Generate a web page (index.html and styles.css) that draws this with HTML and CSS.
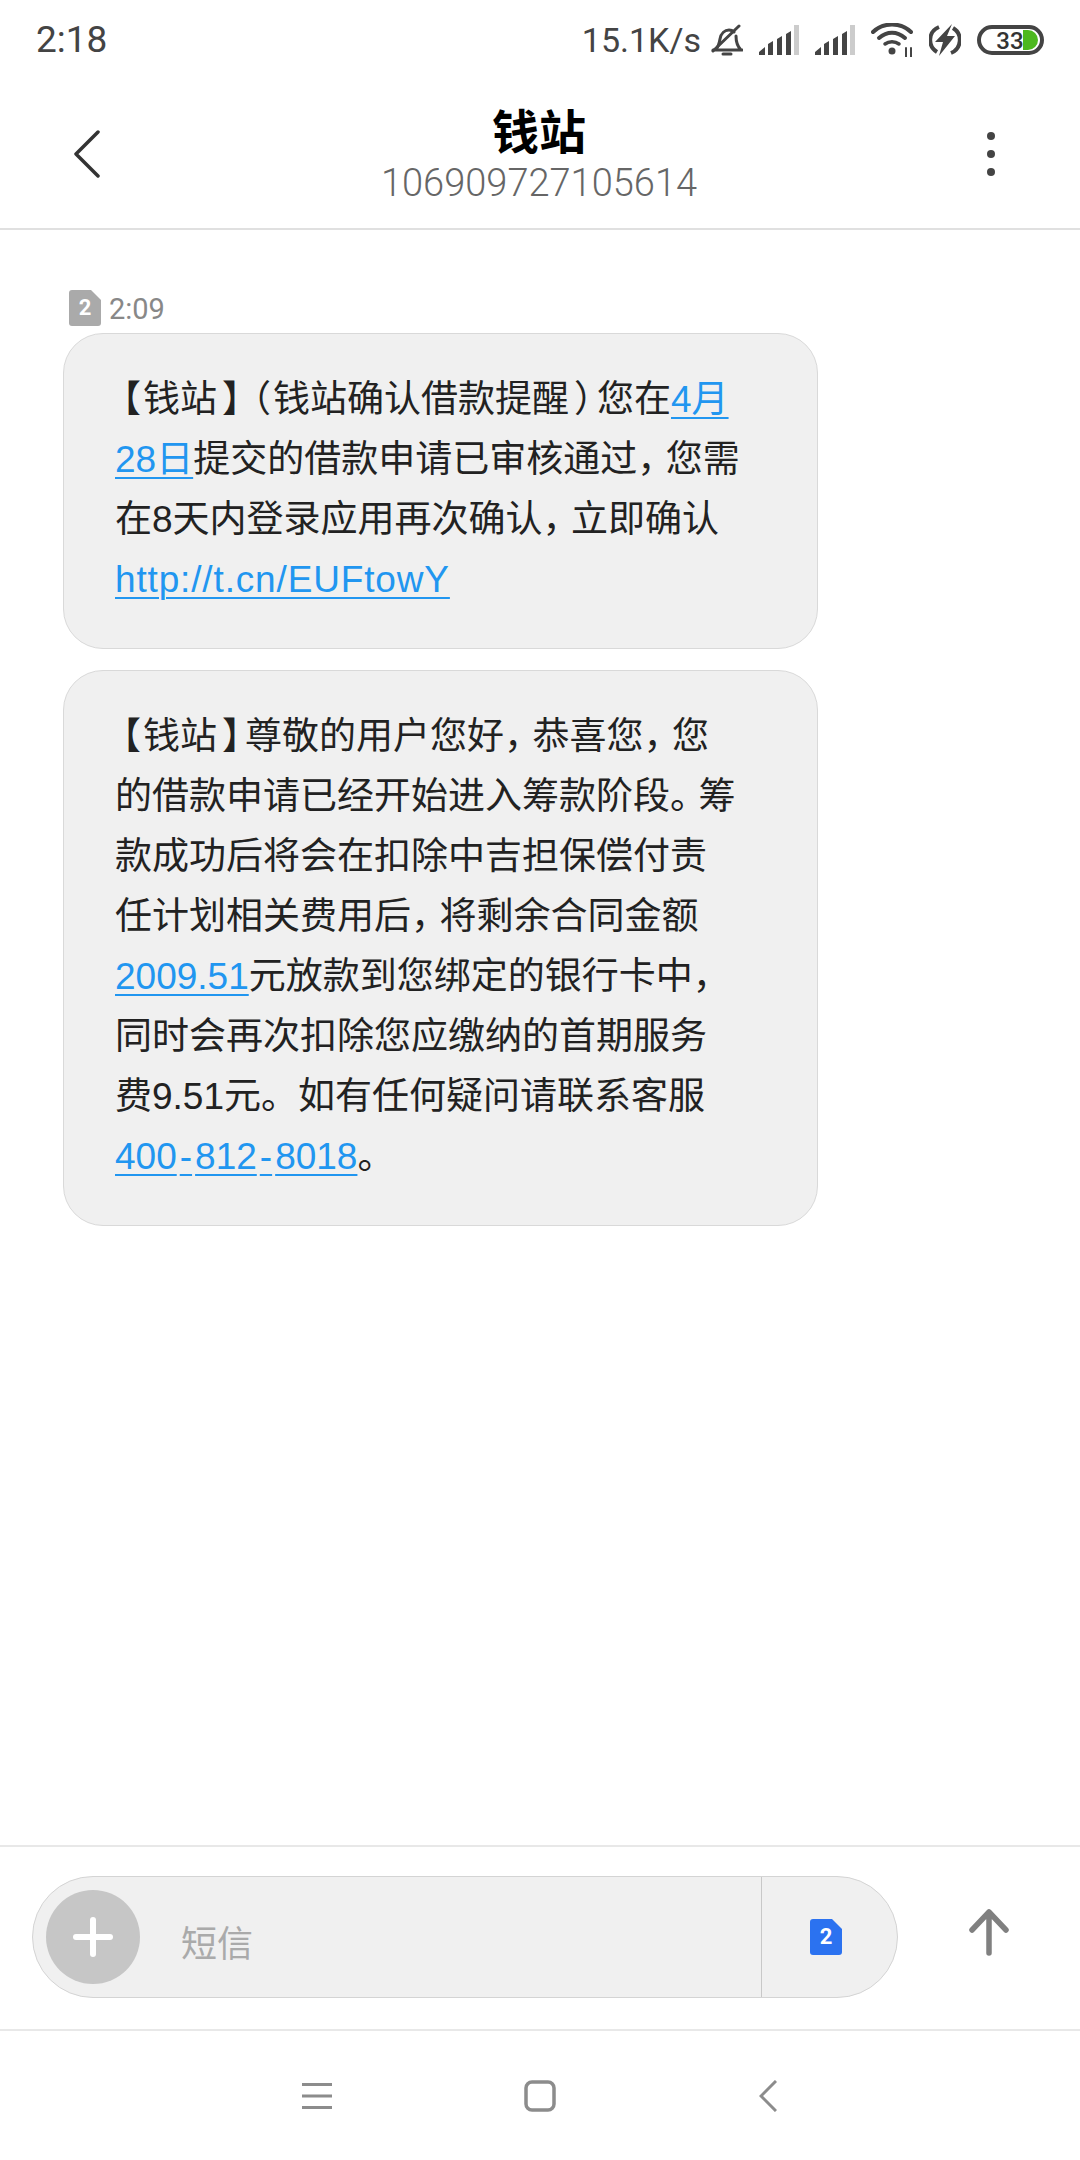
FILE: index.html
```html
<!DOCTYPE html>
<html lang="zh-CN">
<head>
<meta charset="utf-8" />
<title>钱站</title>
<link rel="stylesheet" href="styles.css">
</head>
<body>
<div class="phone">
  <div class="status">
    <span class="clock">2:18</span>
    <div class="status-right">
      <span class="speed">15.1K/s</span>
      <svg width="32" height="32" viewBox="0 0 32 32" fill="none" stroke="#444" stroke-width="3" stroke-linecap="round">
        <path d="M4 26c3-2 4-5 5-11 1-6 5-9 9-9 2 0 4 1 5 2M25 12c0 6 2 11 5 14M2 26h29" />
        <path d="M2 27 28 2" />
        <path d="M12 30h8" />
      </svg>
      <svg width="40" height="30" viewBox="0 0 40 30">
        <path fill="#444" d="M0 30v-3l6-5v8zM9 30V19l5-3v14zM18 30V14l5-3v19zM27 30V9l5-3v24z" />
        <rect x="35" y="0" width="5" height="30" fill="#ccc" />
      </svg>
      <svg width="40" height="30" viewBox="0 0 40 30">
        <path fill="#444" d="M0 30v-3l6-5v8zM9 30V19l5-3v14zM18 30V14l5-3v19zM27 30V9l5-3v24z" />
        <rect x="35" y="0" width="5" height="30" fill="#ccc" />
      </svg>
      <svg width="42" height="34" viewBox="0 0 42 34" fill="none" stroke="#444" stroke-linecap="round">
        <path d="M2 9C12-1 30-1 40 9" stroke-width="4" />
        <path d="M8 15c8-7 18-7 26 0" stroke-width="4" />
        <path d="M14 21c4-3 10-3 14 0" stroke-width="3.500" />
        <circle cx="21" cy="28" r="3.500" fill="#444" stroke="none" />
        <path d="M35 25v9M40 25v9" stroke-width="2" />
      </svg>
      <svg width="32" height="32" viewBox="0 0 32 32" fill="none">
        <path d="M10 3A14 14 0 0 0 8 28M22 29A14 14 0 0 0 24 4" stroke="#444" stroke-width="4" />
        <path d="M23 0 6 18h8l-4 14 16-20h-8z" fill="#444" />
      </svg>
      <svg width="67" height="30" viewBox="0 0 67 30">
        <path d="M46 5h5a10 10 0 0 1 0 20h-5z" fill="#4cb81e" />
        <rect x="2" y="2" width="63" height="26" rx="13" fill="none" stroke="#444" stroke-width="4" />
        <text x="33" y="23.500" class="battery-num" text-anchor="middle">33</text>
      </svg>
    </div>
  </div>

  <div class="header">
    <svg class="back" width="28" height="48" viewBox="0 0 28 48" fill="none" stroke="#333" stroke-width="3.500" stroke-linecap="round" stroke-linejoin="round">
      <path d="M25 2 3 24l22 22" />
    </svg>
    <div class="title-box">
      <div class="title">钱站</div>
      <div class="number">106909727105614</div>
    </div>
    <div class="dots"><i></i><i></i><i></i></div>
  </div>

  <div class="messages">
    <div class="meta">
      <svg width="32" height="36" viewBox="0 0 32 36">
        <path d="M3 0h19l10 10v23a3 3 0 0 1-3 3H3a3 3 0 0 1-3-3V3a3 3 0 0 1 3-3z" fill="#aaa" />
        <text x="16" y="25" class="sim-num" text-anchor="middle">2</text>
      </svg>
      <span class="meta-time">2:09</span>
    </div>
    <div class="bubble">
      <div><span class="open">【</span>钱站<span class="close">】</span><span class="open">（</span>钱站确认借款提醒<span class="close">）</span>您在<a>4月</a></div>
      <div><a>28日</a>提交的借款申请已审核通过<span class="comma">，</span>您需</div>
      <div>在8天内登录应用再次确认<span class="comma">，</span>立即确认</div>
      <div><a class="url">http://t.cn/EUFtowY</a></div>
    </div>
    <div class="bubble">
      <div><span class="open">【</span>钱站<span class="close">】</span>尊敬的用户您好<span class="comma">，</span>恭喜您<span class="comma">，</span>您</div>
      <div>的借款申请已经开始进入筹款阶段<span class="comma">。</span>筹</div>
      <div>款成功后将会在扣除中吉担保偿付责</div>
      <div>任计划相关费用后<span class="comma">，</span>将剩余合同金额</div>
      <div><a>2009.51</a>元放款到您绑定的银行卡中，</div>
      <div>同时会再次扣除您应缴纳的首期服务</div>
      <div>费9.51元。如有任何疑问请联系客服</div>
      <div><a>400<span class="dash">-</span>812<span class="dash">-</span>8018</a>。</div>
    </div>
  </div>

  <div class="compose">
    <div class="pill">
      <div class="plus"></div>
      <div class="placeholder">短信</div>
      <div class="sim">
        <svg width="32" height="36" viewBox="0 0 32 36">
          <path d="M3 0h19l10 10v23a3 3 0 0 1-3 3H3a3 3 0 0 1-3-3V3a3 3 0 0 1 3-3z" fill="#2b72f0" />
          <text x="16" y="25" class="sim-num" text-anchor="middle">2</text>
        </svg>
      </div>
    </div>
    <svg class="send" width="40" height="48" viewBox="0 0 40 48" fill="none" stroke="#808080" stroke-width="5.500" stroke-linecap="round" stroke-linejoin="round">
      <path d="M20 45V4M3 22 20 4l17 18" />
    </svg>
  </div>

  <div class="nav">
    <svg width="30" height="26" viewBox="0 0 30 26" fill="none" stroke="#8c8c8c" stroke-width="3">
      <path d="M0 1.500h30M0 13h30M0 24.500h30" />
    </svg>
    <svg class="nav-home" width="32" height="32" viewBox="0 0 32 32" fill="none" stroke="#8c8c8c" stroke-width="3.500">
      <rect x="2" y="2" width="28" height="28" rx="6" />
    </svg>
    <svg class="nav-back" width="18" height="32" viewBox="0 0 18 32" fill="none" stroke="#8c8c8c" stroke-width="3">
      <path d="M17 1 2 16l15 15" />
    </svg>
  </div>
</div>
</body>
</html>
```

FILE: styles.css
```css
* {
  box-sizing: border-box;
}

body {
  margin: 0;
  background-color: #fff;
  font-family: "Liberation Sans", "Noto Sans CJK SC", sans-serif;
}

.phone {
  width: 1080px;
  height: 2160px;
  display: flex;
  flex-direction: column;
}

.status {
  height: 75px;
  padding: 4px 36px 0;
  display: flex;
  justify-content: space-between;
  align-items: center;
  color: #444;
  font-family: Roboto, sans-serif;
}

.clock {
  font-size: 37px;
}

.status-right {
  display: flex;
  align-items: center;
  gap: 16px;
}

.speed {
  font-size: 34px;
  margin-right: -6px;
}

.battery-num {
  font-family: Roboto, sans-serif;
  font-size: 24px;
  font-weight: 500;
  fill: #333;
}

.header {
  height: 155px;
  padding: 0 73px;
  border-bottom: 2px solid #e0e0e0;
  display: grid;
  grid-template-columns: 1fr auto 1fr;
  align-items: center;
}

.back {
  margin-top: 4px;
}

.title-box {
  text-align: center;
  margin-right: 2px;
}

.title {
  font-family: "Noto Sans CJK SC", sans-serif;
  font-size: 47px;
  font-weight: 700;
  line-height: 60px;
  color: #000;
}

.number {
  margin-top: 3px;
  font-family: Roboto, sans-serif;
  font-size: 38px;
  font-weight: 300;
  line-height: 42px;
  color: #666;
}

.dots {
  justify-self: end;
  display: flex;
  flex-direction: column;
  gap: 10px;
  margin: 4px 12px 0 0;
}

.dots i {
  width: 8px;
  height: 8px;
  border-radius: 50%;
  background-color: #444;
}

.messages {
  flex: 1;
  padding: 60px 0 0 63px;
}

.meta {
  display: flex;
  align-items: center;
  gap: 8px;
  height: 36px;
  margin: 0 0 7px 6px;
  font-family: Roboto, sans-serif;
  font-size: 29px;
  color: #888;
}

.meta-time {
  margin-top: 2px;
}

.sim-num {
  font-family: Roboto, sans-serif;
  font-size: 22px;
  font-weight: 700;
  fill: #fff;
}

.bubble {
  width: 755px;
  margin-bottom: 21px;
  padding: 36px 0 38px 51px;
  border: 1px solid #d9d9d9;
  border-radius: 40px;
  background-color: #f0f0f0;
  font-size: 37px;
  line-height: 60px;
  color: #222;
  white-space: nowrap;
  text-spacing-trim: space-all;
}

.bubble a {
  color: #2196f0;
  text-decoration: underline;
  text-decoration-thickness: 2px;
  text-underline-offset: 5px;
}

.bubble .url {
  letter-spacing: 0.850px;
}

.dash {
  margin: 0 3px;
}

/* the phone font squeezes these brackets and commas to about 0.8em */
.open {
  margin-left: -11px;
  margin-right: 2px;
}

.close {
  margin-left: 5px;
  margin-right: -14px;
}

.comma {
  margin-right: -8.500px;
}

.compose {
  height: 186px;
  padding: 29px 0 0 32px;
  border-top: 2px solid #e8e8e8;
  border-bottom: 2px solid #e8e8e8;
  display: flex;
  align-items: flex-start;
}

.pill {
  width: 866px;
  height: 122px;
  border: 1px solid #d4d4d4;
  border-radius: 61px;
  background-color: #f0f0f0;
  display: flex;
  align-items: center;
}

.plus {
  position: relative;
  width: 94px;
  height: 94px;
  margin-left: 13px;
  border-radius: 50%;
  background-color: #c6c6c6;
}

.plus::before,
.plus::after {
  content: "";
  position: absolute;
  background-color: #fff;
  border-radius: 3px;
}

.plus::before {
  left: 27px;
  top: 44px;
  width: 40px;
  height: 6px;
}

.plus::after {
  left: 44px;
  top: 27px;
  width: 6px;
  height: 40px;
}

.placeholder {
  flex: 1;
  margin: 8px 0 0 41px;
  font-family: "Noto Sans CJK SC", sans-serif;
  font-size: 36px;
  color: #aaa;
}

.sim {
  width: 136px;
  height: 100%;
  padding-right: 8px;
  border-left: 1px solid #c8c8c8;
  display: flex;
  align-items: center;
  justify-content: center;
}

.send {
  margin: 32px 0 0 71px;
}

.nav {
  height: 129px;
  padding-left: 302px;
  display: flex;
  align-items: center;
}

.nav-home {
  margin-left: 192px;
}

.nav-back {
  margin-left: 203px;
}
```
